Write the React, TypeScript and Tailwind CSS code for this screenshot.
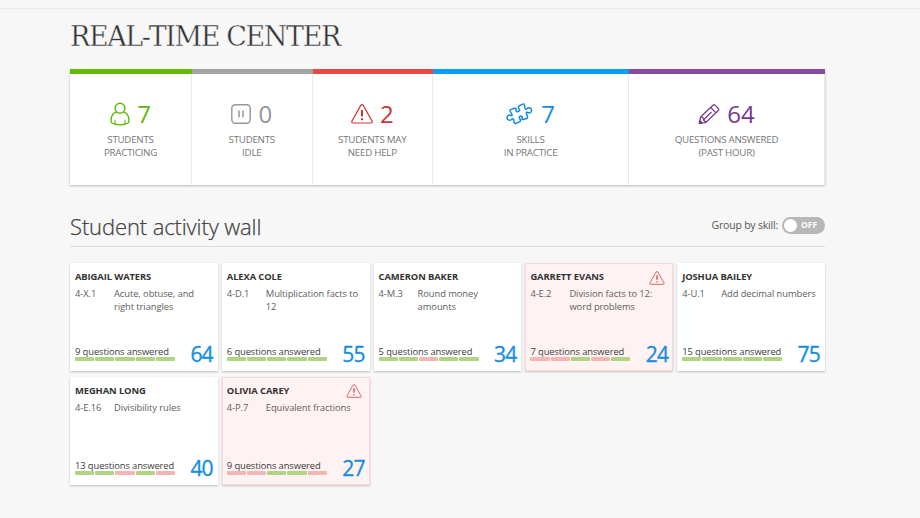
import type { ReactNode } from "react";

function Warning({ className }: { className: string }) {
  return (
    <svg viewBox="0 0 22 20" className={className} fill="none" stroke="currentColor">
      <path d="M9.6 1.6 1 17q-.8 2 1.2 2h17.6q2 0 1.2-2L12.4 1.6q-1.4-1.8-2.8 0Z" strokeWidth="1.2" />
      <path d="M11 6v6.6" strokeWidth="2" />
      <path d="M11 14.2v2" strokeWidth="2" />
    </svg>
  );
}

function Person() {
  return (
    <svg viewBox="0 0 20 24" className="h-6 w-5" fill="none" stroke="currentColor" strokeWidth="1.4" strokeLinecap="round">
      <circle cx="10" cy="6.2" r="5" />
      <path d="M6 10.2C2.6 11.4 1 15 1 19.2c0 1.2.6 1.8 1.8 2.2 4.4 1.8 10 1.8 14.4 0 1.2-.4 1.8-1 1.8-2.2 0-4.2-1.6-7.8-5-9" />
      <path d="M5 18v3.5M15 18v3.5" strokeWidth="1.1" />
    </svg>
  );
}

function Pause() {
  return (
    <svg viewBox="0 0 20 20" className="h-5 w-5" fill="none" stroke="currentColor" strokeWidth="1.4">
      <rect x=".8" y=".8" width="18.4" height="18.4" rx="3.5" />
      <path d="M8 6.500v7M12 6.500v7" strokeWidth="1.5" />
    </svg>
  );
}

function Puzzle() {
  return (
    <svg viewBox="0 0 28 24" className="h-6 w-7" fill="none" stroke="currentColor" strokeWidth="1.5" strokeLinejoin="round">
      <path d="M4.500 7.600 8.500 6.300C10 5.900 10.400 6.700 10 7.800 9.500 9.800 12.400 10.500 13.400 8.700 14.300 7.100 12.200 6.300 12.200 5 12.200 4 13.700 3.700 16.600 2.200 18 1.400 18.300 2.300 18.500 3.500L19 6.200C19.300 7.700 20.200 7.500 20.900 6.700 22.400 4.900 25.300 5.700 25.500 8 25.800 10.500 23.200 11.700 21.700 10.400 20.600 9.800 20.100 10.300 20.400 11.300L21.500 15C21.800 16.200 21 16.500 20 16.800L17.500 17.500C16 17.800 15.700 16.800 16.200 15.800 16.700 14.100 14.300 13.500 13.400 15 12.600 16.400 14.600 17.200 14.700 18.500 14.800 19.800 12.500 20.300 10.300 21.300 8.700 22 8.200 21.300 8 19.900L7.600 17.700C7.300 16.200 6.300 16.500 5.500 17.400 3.900 19.100 1.200 18.200 1 15.900.8 13.600 3.200 12.400 4.800 13.600 5.800 14.200 6.300 13.500 6 12.500L4.300 9.300C4 8.400 3.900 7.900 4.500 7.600Z" />
    </svg>
  );
}

function Pencil() {
  return (
    <svg viewBox="0 0 22 22" className="h-[22px] w-[22px]" fill="none" stroke="currentColor" strokeWidth="1.2" strokeLinejoin="round">
      <path d="M1.2 20.5 2.6 14 15 2.200q1-.9 2 0l3.300 3.300q.9 1 0 2L8 19.300l-6.800 1.200M2.600 14 5 14.500 5.500 17 8 19.300M12.700 4.500 18 9.800M5.500 17 13.500 9" />
      <path d="m1.200 20.500.6-3 2.400 2.400Z" fill="currentColor" />
    </svg>
  );
}

type StatProps = {
  icon: ReactNode;
  value: string;
  lines: [string, string];
  tone: string;
  bar: string;
  width: string;
};

const stats: StatProps[] = [
  { icon: <Person />, value: "7", lines: ["STUDENTS", "PRACTICING"], tone: "text-[#62b80d]", bar: "border-t-[#65ba08]", width: "w-[122px]" },
  { icon: <Pause />, value: "0", lines: ["STUDENTS", "IDLE"], tone: "text-[#969696]", bar: "border-t-[#a3a3a3]", width: "w-[120.5px]" },
  { icon: <Warning className="h-5 w-[22px]" />, value: "2", lines: ["STUDENTS MAY", "NEED HELP"], tone: "text-[#c93632]", bar: "border-t-[#e84a43]", width: "w-[120.5px]" },
  { icon: <Puzzle />, value: "7", lines: ["SKILLS", "IN PRACTICE"], tone: "text-[#168bdc]", bar: "border-t-[#07a0f8]", width: "w-[196px]" },
  { icon: <Pencil />, value: "64", lines: ["QUESTIONS ANSWERED", "(PAST HOUR)"], tone: "text-[#74398f]", bar: "border-t-[#874a9e]", width: "w-[196px]" },
];

function Stat({ icon, value, lines, tone, bar, width }: StatProps) {
  return (
    <div className={`flex flex-col items-center border-t-[5px] bg-white ${bar} ${width}`}>
      <div className="flex w-full flex-1 flex-col items-center border-r border-[#e9e9ed] pt-7">
        <div className={`flex h-6 items-center gap-[7px] ${tone}`}>
          {icon}
          <span className="text-[24px] leading-6">{value}</span>
        </div>
        <div className="mt-[7px] text-center text-[9.8px] leading-[13px] tracking-[-0.28px] whitespace-nowrap text-[#777]">
          <div>{lines[0]}</div>
          <div>{lines[1]}</div>
        </div>
      </div>
    </div>
  );
}

type Student = {
  name: string;
  code: string;
  skill: string[];
  answered: number;
  score: number;
  marks: string;
  alert?: boolean;
};

const students: Student[] = [
  { name: "ABIGAIL WATERS", code: "4-X.1", skill: ["Acute, obtuse, and", "right triangles"], answered: 9, score: 64, marks: "ggggg" },
  { name: "ALEXA COLE", code: "4-D.1", skill: ["Multiplication facts to", "12"], answered: 6, score: 55, marks: "ggggg" },
  { name: "CAMERON BAKER", code: "4-M.3", skill: ["Round money", "amounts"], answered: 5, score: 34, marks: "ggrgg" },
  { name: "GARRETT EVANS", code: "4-E.2", skill: ["Division facts to 12:", "word problems"], answered: 7, score: 24, marks: "rrgrg", alert: true },
  { name: "JOSHUA BAILEY", code: "4-U.1", skill: ["Add decimal numbers"], answered: 15, score: 75, marks: "ggggg" },
  { name: "MEGHAN LONG", code: "4-E.16", skill: ["Divisibility rules"], answered: 13, score: 40, marks: "ggrgr" },
  { name: "OLIVIA CAREY", code: "4-P.7", skill: ["Equivalent fractions"], answered: 9, score: 27, marks: "rrggr", alert: true },
];

function StudentCard({ name, code, skill, answered, score, marks, alert }: Student) {
  return (
    <div
      className={`flex h-[108px] flex-col justify-between px-[5px] ${
        alert
          ? "bg-[#fff2f2] shadow-[inset_0_0_0_1px_#f6dad9,0_1px_2px_#c9c0c0]"
          : "bg-white shadow-[0_1px_2px_#bfbfbf]"
      }`}
    >
      <div className="pt-[7px]">
        <div className="flex h-[14px] items-center justify-between">
          <span className="text-[9.4px] leading-3 font-bold tracking-[-0.1px] whitespace-nowrap text-[#333]">{name}</span>
          {alert && <Warning className="mt-px mr-[3px] h-[14px] w-4 text-[#d94f4c]" />}
        </div>
        <div className="mt-[3px] flex text-[9.4px] leading-[13px] tracking-[-0.08px] whitespace-nowrap text-[#5e5e5e]">
          <span className="w-[39px] shrink-0">{code}</span>
          <div>
            {skill.map((line) => (
              <div key={line}>{line}</div>
            ))}
          </div>
        </div>
      </div>
      <div className="flex items-end justify-between">
        <div className="pb-[10px]">
          <div className="text-[9.4px] leading-[10px] tracking-[-0.1px] whitespace-nowrap text-[#3c3c3c]">{answered} questions answered</div>
          <div className="flex w-[100px] gap-px">
            {marks.split("").map((mark, i) => (
              <span key={i} className={`h-1 flex-1 rounded-[1px] ${mark === "g" ? "bg-[#afd482]" : "bg-[#f4b6b5]"}`} />
            ))}
          </div>
        </div>
        <span className="pb-[5px] text-[21px] leading-6 tracking-[-0.8px] text-[#168fdf] [-webkit-text-stroke:0.35px_#168fdf]">{score}</span>
      </div>
    </div>
  );
}

export default function App() {
  return (
    <div className="h-[518px] w-[920px] overflow-hidden bg-[#f7f7f7] font-['Open_Sans','Noto_Sans',sans-serif]">
      <div className="h-[9px] border-b border-[#e9eaf1]" />
      <main className="ml-[70px] flex w-[755px] flex-col">
        <h1 className="flex h-[60px] items-center pb-[3px] font-['Roboto_Slab','DejaVu_Serif',serif] text-[27px] font-light tracking-[-1.4px] whitespace-nowrap text-[#333] [-webkit-text-stroke:0.4px_#f7f7f7]">
          REAL-TIME CENTER
        </h1>
        <section className="flex h-[116px] shadow-[0_1px_2px_#b8b8b8]">
          {stats.map((stat) => (
            <Stat key={stat.lines.join(" ")} {...stat} />
          ))}
        </section>
        <header className="mt-[19px] flex h-[43px] items-center justify-between border-b border-[#d3e0de]">
          <h2 className="pt-0.5 text-[22px] font-light tracking-[-0.12px] whitespace-nowrap text-[#444] [-webkit-text-stroke:0.25px_#444]">Student activity wall</h2>
          <div className="flex items-center gap-1">
            <span className="pt-px text-[10.5px] tracking-[-0.2px] text-[#555]">Group by skill:</span>
            <button className="flex h-[17px] w-[43px] items-center gap-1 rounded-full bg-[#b7b7b7] px-0.5 text-[8.5px] font-bold text-white">
              <span className="h-[13px] w-[13px] rounded-full bg-white" />
              OFF
            </button>
          </div>
        </header>
        <section className="mt-4 grid grid-cols-5 gap-x-1 gap-y-[5.5px]">
          {students.map((student) => (
            <StudentCard key={student.name} {...student} />
          ))}
        </section>
      </main>
    </div>
  );
}
